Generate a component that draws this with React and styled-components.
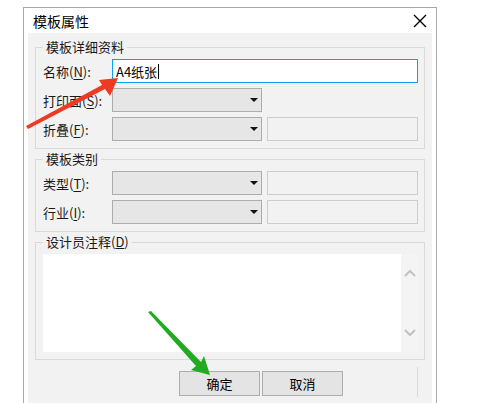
import React from 'react';
import styled, { createGlobalStyle } from 'styled-components';

const GlobalStyle = createGlobalStyle`
    html, body {
        margin: 0;
        padding: 0;
        background: #ffffff;
    }
    body {
        font-family: "Noto Sans CJK SC", "Liberation Sans", sans-serif;
        font-size: 13px;
        color: #1a1a1a;
    }
`;

const Page = styled.div`
    position: relative;
    width: 480px;
    height: 403px;
    overflow: hidden;
    padding: 7px 0 0 23px;
    box-sizing: border-box;
`;

const Dialog = styled.div`
    width: 414px;
    height: 396px;
    box-sizing: border-box;
    border: 1px solid #a9a9a9;
    border-bottom: none;
    background: #ffffff;
    padding: 0 4px;
    display: flex;
    flex-direction: column;
`;

const TitleBar = styled.div`
    height: 25px;
    display: flex;
    align-items: center;
    justify-content: space-between;
    padding-left: 5px;
    font-size: 14px;
    color: #000;
`;

const CloseIcon = styled.svg`
    width: 14px;
    height: 14px;
    margin-right: 5px;
`;

const Body = styled.div`
    flex: 1;
    background: #f2f2f2;
    padding: 6px 7px 0 7px;
    display: flex;
    flex-direction: column;
    gap: 2px;
`;

const Group = styled.fieldset`
    margin: 0;
    border: 1px solid #d9d9d9;
    padding: 4px 6px 7px 7px;
    min-width: 0;
    display: flex;
    flex-direction: column;
    gap: 5px;
`;

const Legend = styled.legend`
    padding: 0 3px;
    margin-left: -7px;
    margin-left: 0;
    line-height: 16px;
    font-size: 13px;
    color: #1a1a1a;
`;

const Row = styled.div`
    display: flex;
    align-items: center;
    height: 24px;
`;

const Label = styled.label`
    width: 69px;
    flex: none;
    white-space: nowrap;
    u {
        text-decoration: underline;
        text-underline-offset: 2px;
    }
`;

const TextInput = styled.div`
    width: 306px;
    height: 24px;
    box-sizing: border-box;
    border: 1px solid #0aa2ee;
    background: #fff;
    display: flex;
    align-items: center;
    padding-left: 3px;
    font-size: 13px;
    color: #000;
`;

const Caret = styled.span`
    display: inline-block;
    width: 1px;
    height: 15px;
    background: #000;
    margin-left: 1px;
`;

const Fields = styled.div`
    display: flex;
    gap: 5px;
`;

const Combo = styled.div`
    width: 150px;
    height: 24px;
    box-sizing: border-box;
    border: 1px solid #adadad;
    background: #e6e6e6;
    display: flex;
    align-items: center;
    justify-content: flex-end;
    padding-right: 3px;
`;

const ComboArrow = styled.span`
    width: 0;
    height: 0;
    border-left: 4px solid transparent;
    border-right: 4px solid transparent;
    border-top: 4px solid #111;
`;

const BlankBox = styled.div`
    width: 151px;
    height: 24px;
    box-sizing: border-box;
    border: 1px solid #cdcdcd;
    background: #f2f2f2;
`;

const NoteArea = styled.div`
    display: flex;
    height: 98px;
    background: #ffffff;
`;

const NoteText = styled.div`
    flex: 1;
`;

const ScrollBar = styled.div`
    width: 17px;
    background: #f4f4f4;
    display: flex;
    flex-direction: column;
    justify-content: space-between;
    align-items: center;
    padding: 15px 0 15px;
`;

const ButtonRow = styled.div`
    display: flex;
    align-items: flex-start;
    gap: 2px;
    margin-top: 9px;
    padding-left: 144px;
`;

const Button = styled.button`
    width: 81px;
    height: 25px;
    box-sizing: border-box;
    border: 1px solid #adadad;
    background: #e4e4e4;
    font-family: inherit;
    font-size: 13px;
    color: #000;
    padding: 0;
`;

const Grip = styled.div`
    margin-left: auto;
    margin-right: 7px;
    margin-top: -4px;
    width: 1px;
    height: 30px;
    background: #dadada;
`;

const Annotations = styled.svg`
    position: absolute;
    left: 0;
    top: 0;
    width: 480px;
    height: 403px;
    pointer-events: none;
`;

const Chevron = ({ up }) => (
    <svg width="12" height="8" viewBox="0 0 12 8">
        <path
            d={up ? 'M1 7 L6 2 L11 7' : 'M1 1 L6 6 L11 1'}
            fill="none"
            stroke="#c2c2c2"
            strokeWidth="2"
        />
    </svg>
);

const ComboWithBox = () => (
    <Fields>
        <Combo><ComboArrow /></Combo>
        <BlankBox />
    </Fields>
);

const App = () => {
    return (
        <Page>
            <GlobalStyle />
            <Dialog>
                <TitleBar>
                    模板属性
                    <CloseIcon viewBox="0 0 14 14">
                        <path d="M1 1 L13 13 M13 1 L1 13" stroke="#000" strokeWidth="1.4" />
                    </CloseIcon>
                </TitleBar>
                <Body>
                    <Group>
                        <Legend>模板详细资料</Legend>
                        <Row>
                            <Label>名称(<u>N</u>):</Label>
                            <TextInput>A4纸张<Caret /></TextInput>
                        </Row>
                        <Row>
                            <Label>打印面(<u>S</u>):</Label>
                            <Combo><ComboArrow /></Combo>
                        </Row>
                        <Row>
                            <Label>折叠(<u>F</u>):</Label>
                            <ComboWithBox />
                        </Row>
                    </Group>
                    <Group>
                        <Legend>模板类别</Legend>
                        <Row>
                            <Label>类型(<u>T</u>):</Label>
                            <ComboWithBox />
                        </Row>
                        <Row>
                            <Label>行业(<u>I</u>):</Label>
                            <ComboWithBox />
                        </Row>
                    </Group>
                    <Group>
                        <Legend>设计员注释(<u>D</u>)</Legend>
                        <NoteArea>
                            <NoteText />
                            <ScrollBar>
                                <Chevron up />
                                <Chevron />
                            </ScrollBar>
                        </NoteArea>
                    </Group>
                    <ButtonRow>
                        <Button>确定</Button>
                        <Button>取消</Button>
                        <Grip />
                    </ButtonRow>
                </Body>
            </Dialog>
            <Annotations viewBox="0 0 480 403">
                <polygon
                    points="118,78 99,80 102,85 26,126 28,129 105,89 110,96"
                    fill="#ee3a24"
                />
                <polygon
                    points="148,312 151,311 201,362 204,356 210,375 191,370 196,366"
                    fill="#21ab21"
                />
            </Annotations>
        </Page>
    );
};

export default App;
